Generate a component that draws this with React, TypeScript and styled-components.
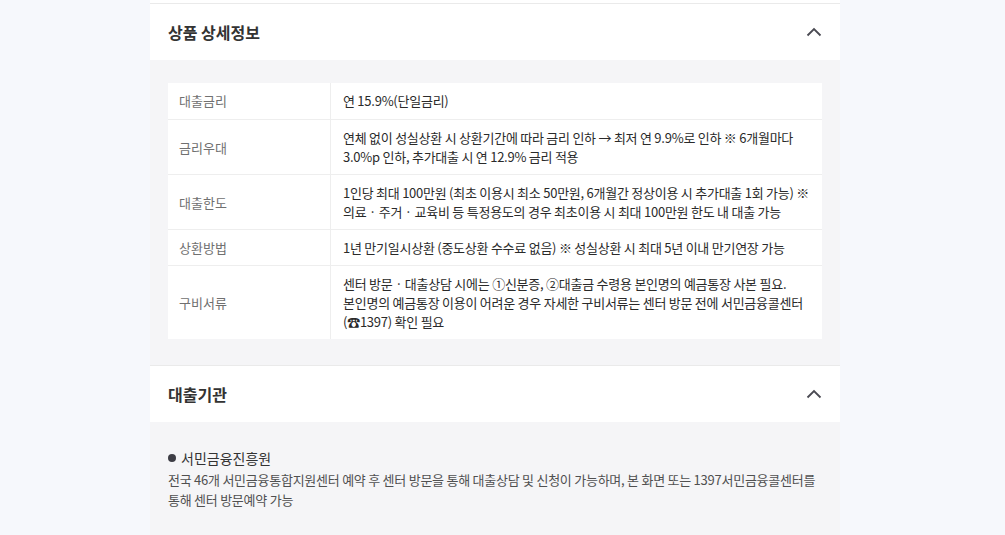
import React from "react";
import styled, { createGlobalStyle } from "styled-components";

const Global = createGlobalStyle`
  html, body { margin: 0; padding: 0; }
  body {
    background: #f6f8fc;
    font-family: "Noto Sans CJK KR", "Noto Sans", sans-serif;
    color: #333;
    -webkit-font-smoothing: antialiased;
  }
`;

const Column = styled.div`
  width: 690px;
  margin-left: 150px;
  background: #fff;
  padding-top: 3px;
  display: flex;
  flex-direction: column;
`;

const Section = styled.section`
  border-top: 1px solid #eaeaea;
`;

const Header = styled.div`
  height: 56px;
  display: flex;
  align-items: center;
  justify-content: space-between;
  padding: 0 18px;
  background: #fff;
`;

const Title = styled.h2`
  margin: 0;
  font-size: 16px;
  font-weight: 700;
  color: #333;
`;

const Body = styled.div<{ $pad: string }>`
  background: #f5f5f7;
  padding: ${(p) => p.$pad};
`;

const Table = styled.div`
  background: #fff;
  display: grid;
  grid-template-columns: 163px 1fr;
`;

const Label = styled.div<{ $first?: boolean }>`
  display: flex;
  align-items: center;
  padding: ${(p) => (p.$first ? "8px 11px 9px" : "8px 11px")};
  font-size: 13px;
  line-height: 19px;
  color: #707070;
  border-right: 1px solid #eee;
  border-top: ${(p) => (p.$first ? "none" : "1px solid #eee")};
`;

const Value = styled.div<{ $first?: boolean }>`
  padding: ${(p) => (p.$first ? "8px 12px 9px" : "8px 12px")};
  font-size: 13px;
  line-height: 19px;
  color: #2a2a2a;
  letter-spacing: -0.25px;
  border-top: ${(p) => (p.$first ? "none" : "1px solid #eee")};
`;

const OrgName = styled.div`
  display: flex;
  align-items: center;
  gap: 5px;
  font-size: 14px;
  line-height: 20px;
  color: #333;
`;

const Dot = styled.span`
  width: 8px;
  height: 8px;
  border-radius: 50%;
  background: #3d3d45;
`;

const Desc = styled.p`
  margin: 2px 0 0;
  font-size: 13px;
  line-height: 20px;
  color: #505050;
  letter-spacing: -0.25px;
`;

const Chevron = () => (
  <svg width="16" height="10" viewBox="0 0 16 10" fill="none">
    <polyline points="1.5,8.5 8,2 14.5,8.5" stroke="#4a4a52" strokeWidth="1.8" />
  </svg>
);

const rows: [string, React.ReactNode][] = [
  ["대출금리", "연 15.9%(단일금리)"],
  [
    "금리우대",
    "연체 없이 성실상환 시 상환기간에 따라 금리 인하 → 최저 연 9.9%로 인하 ※ 6개월마다 3.0%p 인하, 추가대출 시 연 12.9% 금리 적용",
  ],
  [
    "대출한도",
    "1인당 최대 100만원 (최초 이용시 최소 50만원, 6개월간 정상이용 시 추가대출 1회 가능) ※ 의료 · 주거 · 교육비 등 특정용도의 경우 최초이용 시 최대 100만원 한도 내 대출 가능",
  ],
  ["상환방법", "1년 만기일시상환 (중도상환 수수료 없음) ※ 성실상환 시 최대 5년 이내 만기연장 가능"],
  [
    "구비서류",
    <>
      센터 방문 · 대출상담 시에는 ①신분증, ②대출금 수령용 본인명의 예금통장 사본 필요.
      <br />
      본인명의 예금통장 이용이 어려운 경우 자세한 구비서류는 센터 방문 전에 서민금융콜센터 (☎1397) 확인 필요
    </>,
  ],
];

export default function App() {
  return (
    <>
      <Global />
      <Column>
        <Section>
          <Header>
            <Title>상품 상세정보</Title>
            <Chevron />
          </Header>
          <Body $pad="23px 18px 26px">
            <Table>
              {rows.map(([l, v], i) => (
                <React.Fragment key={l}>
                  <Label $first={i === 0}>{l}</Label>
                  <Value $first={i === 0}>{v}</Value>
                </React.Fragment>
              ))}
            </Table>
          </Body>
        </Section>
        <Section>
          <Header>
            <Title>대출기관</Title>
            <Chevron />
          </Header>
          <Body $pad="26px 18px 40px">
            <OrgName>
              <Dot />
              서민금융진흥원
            </OrgName>
            <Desc>
              전국 46개 서민금융통합지원센터 예약 후 센터 방문을 통해 대출상담 및 신청이 가능하며, 본 화면 또는 1397서민금융콜센터를 통해 센터 방문예약 가능
            </Desc>
          </Body>
        </Section>
      </Column>
    </>
  );
}
